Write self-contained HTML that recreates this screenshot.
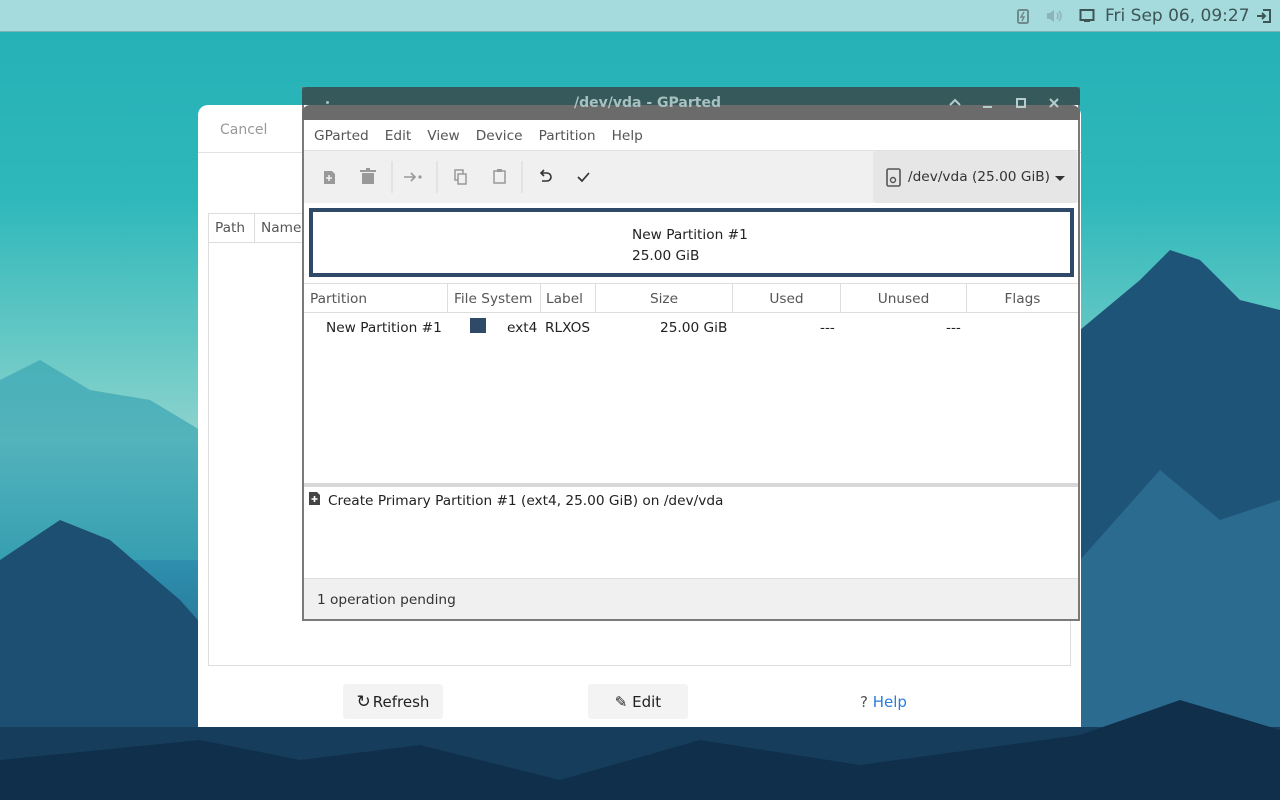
<!DOCTYPE html>
<html><head><meta charset="utf-8"><style>
*{box-sizing:border-box;margin:0;padding:0}
body{width:1280px;height:800px;overflow:hidden;position:relative;font-family:"DejaVu Sans","Liberation Sans",sans-serif;font-size:13.7px;color:#2e2e2e;background:linear-gradient(180deg,#23b0b6 0%,#2fb8bb 25%,#6ccac6 45%,#8fd3ce 55%,#2f8fae 70%,#1b4d70 100%)}
.abs{position:absolute}
#panel{left:0;top:0;width:1280px;height:32px;background:#a6dbdd;border-bottom:1px solid #7fb3b6;color:#3e5556;font-size:17px}
#dlg{left:198px;top:105px;width:883px;height:622px;background:#fff;border-radius:10px 10px 0 0}
.btn{background:#f3f3f3;border-radius:3px;height:35px;top:684px;font-size:15px;display:flex;align-items:center;justify-content:center;color:#222}
#win{left:302px;top:87px;width:778px;height:534px;background:#fff;border-left:2px solid #7a7a7a;border-right:2px solid #7a7a7a;border-bottom:2px solid #7a7a7a}
.menu span{margin-right:16px}
.th{position:absolute;top:0;height:28px;line-height:30px;border-right:1px solid #ddd;color:#555;font-size:13.7px}
</style></head><body>
<svg class="abs" style="left:0;top:0" width="1280" height="800">
<polygon points="0,380 40,360 90,390 150,400 200,430 200,560 0,560" fill="#3aa5b4" opacity=".7"/>
<polygon points="0,560 60,520 110,540 180,600 260,690 320,800 0,800" fill="#1c4f72"/>
<polygon points="1080,330 1140,280 1170,250 1200,260 1240,300 1280,310 1280,800 1080,800" fill="#1f5479"/>
<polygon points="1080,560 1160,470 1220,520 1280,500 1280,800 1080,800" fill="#2a6b8f"/>
<polygon points="0,727 1280,727 1280,800 0,800" fill="#163e5c"/>
<polygon points="200,740 300,760 420,745 560,780 700,740 860,765 1080,735 1180,700 1280,730 1280,800 0,800 0,760" fill="#0f2f4a"/>
</svg>
<div id="panel" class="abs">
 <svg class="abs" style="left:1016px;top:8px" width="14" height="16"><rect x="2" y="2" width="10" height="13" rx="1.5" fill="none" stroke="#6e8a8c" stroke-width="2"/><path d="M8 4 5 9h3l-2 4" stroke="#6e8a8c" fill="none" stroke-width="1.5"/></svg>
 <svg class="abs" style="left:1046px;top:9px" width="18" height="14"><path d="M1 4h3l4-3v12l-4-3H1z" fill="#8fb3b5"/><path d="M11 4q2 3 0 6M13 2q4 5 0 10" stroke="#8fb3b5" fill="none" stroke-width="1.5"/></svg>
 <svg class="abs" style="left:1079px;top:8px" width="16" height="16"><rect x="1.5" y="2" width="13" height="10" fill="none" stroke="#3e5556" stroke-width="2"/><rect x="5" y="12" width="6" height="2" fill="#3e5556"/></svg>
 <div class="abs" style="left:1105px;top:6px">Fri Sep 06, 09:27</div>
 <svg class="abs" style="left:1256px;top:8px" width="16" height="16"><path d="M7 2h7v12H7" fill="none" stroke="#3e5556" stroke-width="2"/><path d="M1 8h8M6 5l3 3-3 3" fill="none" stroke="#3e5556" stroke-width="2"/></svg>
</div>
<div id="dlg" class="abs">
 <div class="abs" style="left:22px;top:17px;color:#999;font-size:14px">Cancel</div>
 <div class="abs" style="left:0;top:47px;width:883px;height:1px;background:#e2e2e2"></div>
 <div class="abs" style="left:10px;top:108px;width:863px;height:453px;border:1px solid #ddd">
  <div class="abs" style="left:0;top:0;width:46px;height:29px;border-right:1px solid #ddd;border-bottom:1px solid #ddd;color:#555;padding:6px 6px">Path</div>
  <div class="abs" style="left:46px;top:0;width:60px;height:29px;border-bottom:1px solid #ddd;color:#555;padding:6px 6px">Name</div>
 </div>
</div>
<div class="abs btn" style="left:343px;width:100px"><span style="font-size:17px;margin-right:2px">↻</span>Refresh</div>
<div class="abs btn" style="left:588px;width:100px">✎ Edit</div>
<div class="abs" style="left:860px;top:693px;font-size:15px;color:#555">? <span style="color:#2a7ce0">Help</span></div>

<div id="win" class="abs">
 <div class="abs" style="left:-2px;top:0;width:778px;height:18px;background:#365a5c;border-radius:3px 3px 0 0"></div>
 <div class="abs" style="left:-2px;top:18px;width:778px;height:15px;background:#6b6b6b;border-radius:8px 8px 0 0"></div>
 <div class="abs" style="left:270px;top:8px;color:#a8c0c0;font-size:14px;font-weight:bold">/dev/vda - GParted</div>
 <div class="abs" style="left:22px;top:14px;width:3px;height:3px;background:#a8c0c0;border-radius:50%"></div>
 <svg class="abs" style="left:642px;top:9px" width="120" height="14"><path d="M4 9l5-5 5 5" stroke="#b7cccc" fill="none" stroke-width="2"/><rect x="37" y="10" width="9" height="2" fill="#b7cccc"/><rect x="71" y="3" width="8" height="8" fill="none" stroke="#b7cccc" stroke-width="2"/><path d="M104 3l8 8M112 3l-8 8" stroke="#b7cccc" stroke-width="2"/></svg>
 <div class="abs menu" style="left:10px;top:41px;color:#555"><span>GParted</span><span>Edit</span><span>View</span><span>Device</span><span>Partition</span><span>Help</span></div>
 <div class="abs" style="left:0;top:63px;width:774px;height:53px;background:#f0f0f0;border-top:1px solid #e0e0e0">
  <svg class="abs" style="left:0;top:0" width="300" height="52">
   <path d="M20 20h8l3 3v10H20z" fill="#999"/><path d="M25 24v6M22 27h6" stroke="#f0f0f0" stroke-width="1.6"/>
   <rect x="58" y="22" width="12" height="11" fill="#999"/><rect x="56" y="19" width="16" height="2" fill="#999"/><rect x="62" y="17" width="4" height="2" fill="#999"/>
   <line x1="88" y1="10" x2="88" y2="42" stroke="#d6d6d6"/>
   <path d="M100 26h11M107 22l4 4-4 4" stroke="#999" fill="none" stroke-width="1.6"/><circle cx="116" cy="26" r="1.6" fill="#999"/>
   <line x1="133" y1="10" x2="133" y2="42" stroke="#d6d6d6"/>
   <rect x="151" y="19" width="8" height="10" fill="none" stroke="#999" stroke-width="1.5"/><rect x="154" y="23" width="8" height="10" fill="#f0f0f0" stroke="#999" stroke-width="1.5"/>
   <rect x="190" y="20" width="11" height="12" fill="none" stroke="#999" stroke-width="1.5"/><rect x="193" y="18" width="5" height="3" fill="#999"/>
   <line x1="218" y1="10" x2="218" y2="42" stroke="#d6d6d6"/>
   <path d="M237 22h6a4 4 0 0 1 0 8h-5M240 19l-3 3 3 3" stroke="#333" fill="none" stroke-width="1.6"/>
   <path d="M274 26l4 4 7-8" stroke="#333" fill="none" stroke-width="1.7"/>
  </svg>
  <div class="abs" style="left:569px;top:0;width:204px;height:52px;background:#e6e6e6;border-radius:3px"></div>
  <svg class="abs" style="left:582px;top:17px" width="16" height="19"><rect x="1" y="1" width="13" height="17" rx="1.5" fill="none" stroke="#555" stroke-width="1.6"/><circle cx="7" cy="12" r="2.5" fill="none" stroke="#555" stroke-width="1.4"/></svg>
  <div class="abs" style="left:604px;top:18px;color:#333">/dev/vda (25.00 GiB)</div>
  <svg class="abs" style="left:750px;top:24px" width="12" height="8"><path d="M1 1h10L6 6z" fill="#333"/></svg>
 </div>
 <div class="abs" style="left:5px;top:121px;width:765px;height:69px;border:4px solid #2f4a68">
  <div class="abs" style="left:319px;top:13px;line-height:21px;color:#222">New Partition #1<br>25.00 GiB</div>
 </div>
 <div class="abs" style="left:0;top:196px;width:774px;height:1px;background:#ddd"></div>
 <div class="abs" style="left:0;top:197px;width:774px;height:29px;border-bottom:1px solid #ddd">
  <div class="th" style="left:0;width:144px;padding-left:6px">Partition</div>
  <div class="th" style="left:144px;width:93px;padding-left:6px">File System</div>
  <div class="th" style="left:237px;width:55px;padding-left:5px">Label</div>
  <div class="th" style="left:292px;width:137px;text-align:center">Size</div>
  <div class="th" style="left:429px;width:108px;text-align:center">Used</div>
  <div class="th" style="left:537px;width:126px;text-align:center">Unused</div>
  <div class="th" style="left:663px;width:111px;text-align:center;border-right:none">Flags</div>
 </div>
 <div class="abs" style="left:22px;top:233px;color:#222">New Partition #1</div>
 <div class="abs" style="left:166px;top:231px;width:16px;height:15px;background:#2f4a68"></div>
 <div class="abs" style="left:203px;top:233px;color:#222">ext4</div>
 <div class="abs" style="left:241px;top:233px;color:#222">RLXOS</div>
 <div class="abs" style="left:356px;top:233px;color:#222">25.00 GiB</div>
 <div class="abs" style="left:516px;top:233px;color:#222">---</div>
 <div class="abs" style="left:642px;top:233px;color:#222">---</div>
 <div class="abs" style="left:0;top:396px;width:774px;height:4px;background:#d8d8d8"></div>
 <svg class="abs" style="left:5px;top:405px" width="12" height="14"><path d="M0 0h8l3 3v10H0z" fill="#444"/><path d="M5.5 4v6M2.5 7h6" stroke="#fff" stroke-width="1.6"/></svg>
 <div class="abs" style="left:24px;top:406px;color:#222">Create Primary Partition #1 (ext4, 25.00 GiB) on /dev/vda</div>
 <div class="abs" style="left:0;top:491px;width:774px;height:41px;background:#f0f0f0;border-top:1px solid #ddd">
  <div class="abs" style="left:13px;top:13px;color:#333">1 operation pending</div>
 </div>
</div>
</body></html>
